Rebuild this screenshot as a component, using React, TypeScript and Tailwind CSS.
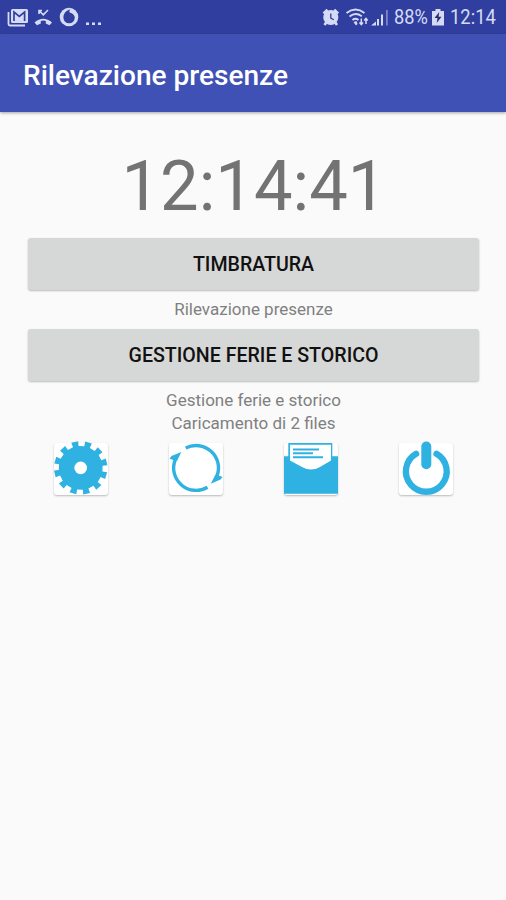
import type { ReactNode } from 'react';

const BLUE = '#2fb1e1';

// Outline of a twelve-toothed gear centred in its tile
function gearPath() {
  const points: string[] = [];
  const add = (deg: number, r: number) => {
    const a = (deg * Math.PI) / 180;
    points.push(`${(26.7 + r * Math.sin(a)).toFixed(2)} ${(24.9 - r * Math.cos(a)).toFixed(2)}`);
  };
  for (let i = 0; i < 12; i++) {
    const c = 17 + i * 30;
    add(c - 7.5, 22);
    add(c - 7.5, 26.8);
    add(c + 7.5, 26.8);
    add(c + 7.5, 22);
  }
  return `M${points.join('L')}Z`;
}

function Tile({ label, children }: { label: string; children: ReactNode }) {
  return (
    <button
      aria-label={label}
      className="h-[52px] w-[54px] rounded-[3px] bg-white shadow-[0_1px_2px_rgba(0,0,0,0.26)]"
    >
      <svg viewBox="0 0 54 52" className="block h-[52px] w-[54px] overflow-visible" fill="none">
        {children}
      </svg>
    </button>
  );
}

function WideButton({ children }: { children: ReactNode }) {
  return (
    <button className="h-[52px] w-full rounded-[3px] bg-[#d6d8d7] text-[19.600px] leading-[54px] font-medium text-[#111] shadow-[0_1px_2px_rgba(0,0,0,0.26)]">
      {children}
    </button>
  );
}

function StatusBar() {
  return (
    <div className="flex h-[34px] items-center justify-between bg-[#303f9f] pr-[9px] pl-[7px] text-[#d6dbf5]">
      <svg width="98" height="34" viewBox="7 0 98 34" fill="none">
        <path d="M8.500 12v12q0 1.500 1.500 1.500H25" stroke="currentColor" strokeWidth="1.800" />
        <rect x="11" y="9" width="17" height="14" rx="1.500" fill="currentColor" />
        <path d="M14 21v-9l5.300 4.500 5.300-4.500v9" stroke="#303f9f" strokeWidth="1.700" />
        <path d="M39 10.500l4.300 4.300 4.700-4.800M39 14v-3.500h3" stroke="currentColor" strokeWidth="1.600" />
        <path d="M34.500 22.500q8.800-7.500 17.500 0l-2.500 2.700-3.700-1.800v-2.500q-2.500-1-5 0v2.500L37 25.200z" fill="currentColor" />
        <circle cx="69" cy="17" r="9.300" fill="currentColor" />
        <path d="M70.500 9.500c-1.500 1.200-1.300 2.200-.8 2.900 3 .6 5.100 2.700 5.100 5.200a5.700 5.700 0 0 1-11.400 0c0-4 2.700-7.500 7.100-8.100z" fill="#303f9f" />
        <path d="M86 22.500h3v2.500h-3zM92 22.500h3v2.500h-3zM98 22.500h3v2.500h-3z" fill="currentColor" />
      </svg>
      <div className="flex items-center">
        <svg width="73" height="34" viewBox="320 0 73 34" fill="none">
          <circle cx="329.800" cy="17.500" r="7.500" fill="currentColor" />
          <path d="M322.500 13.500l4-3.800M333.200 9.700l4 3.800M325.500 22l-2 3M334 22l2 3" stroke="currentColor" strokeWidth="2.600" />
          <path d="M329.800 13.500v4.500l3 1.700" stroke="#303f9f" strokeWidth="1.300" />
          <path d="M345.500 13q9-7 18 0M348.500 16.500q6-4.800 12.300-.3M351.500 20q3-2.500 6 0" stroke="currentColor" strokeWidth="1.800" />
          <path d="M352.500 22l3-1 1 3-1.500 1.500z" fill="currentColor" />
          <path d="M360.300 18.500v6M358.500 22.500l1.800 2 1.700-2M365 24v-5.500M363.200 20.500l1.800-2 1.700 2" stroke="currentColor" strokeWidth="1.500" />
          <path d="M370 25.500l5-4v4zM376 19h2v6.500h-2zM380 14.500h2v11h-2z" fill="currentColor" />
          <path d="M385 10h1.800v15.500H385z" fill="currentColor" opacity=".45" />
        </svg>
        <span className="w-[38px] origin-left scale-x-[.91] text-[20px] leading-[36px] whitespace-nowrap">88%</span>
        <svg width="13" height="34" viewBox="431 0 13 34" className="mr-[5px]">
          <path d="M434.500 9h5v2h3.500v14.500h-12V11h3.500z" fill="currentColor" />
          <path d="M438.300 12l-4.800 6h3l-.8 5 4.800-6.200h-3z" fill="#252d68" />
        </svg>
        <span className="w-[47px] origin-left scale-x-[.92] text-[20px] leading-[36px] whitespace-nowrap">12:14</span>
      </div>
    </div>
  );
}

export default function App() {
  return (
    <div className="min-h-screen w-full bg-[#fafafa] font-['Roboto',sans-serif]">
      <StatusBar />
      <header className="flex h-[78px] items-center bg-[#3f51b5] pt-[6px] pl-[23px] shadow-[0_1px_3px_rgba(0,0,0,0.35)]">
        <h1 className="origin-left scale-x-[.985] text-[28.500px] leading-[32px] font-medium whitespace-nowrap text-white">Rilevazione presenze</h1>
      </header>
      <main className="flex flex-col items-center pt-[32px] pr-[27px] pl-[28px]">
        <time className="h-[94px] scale-x-[.975] text-[70.500px] leading-[84px] text-[#737373]">12:14:41</time>
        <WideButton>TIMBRATURA</WideButton>
        <p className="pt-[8px] pb-[8px] text-[17px] leading-[23px] text-[#808080]">Rilevazione presenze</p>
        <WideButton>GESTIONE FERIE E STORICO</WideButton>
        <p className="pt-[8px] text-[17px] leading-[23px] text-[#808080]">Gestione ferie e storico</p>
        <p className="text-[17px] leading-[23px] text-[#808080]">Caricamento di 2 files</p>
        <nav className="mt-[8px] flex w-[400px] justify-between">
          <Tile label="Impostazioni">
            <path d={gearPath()} fill={BLUE} />
            <circle cx="26.700" cy="24.900" r="6.300" fill="white" />
          </Tile>
          <Tile label="Sincronizza">
            <path d="M16.700 5.100A22.400 22.400 0 0 1 48 33" stroke={BLUE} strokeWidth="3.400" />
            <path d="M38.500 44.200A22.400 22.400 0 0 1 6.300 16.500" stroke={BLUE} strokeWidth="3.400" />
            <path d="M.5 15.800L2.500 13 12.300 9 8 18 4.500 17zM53.500 34L51.500 36.500 41.800 40.800 46.500 31.500 49.800 32.500z" fill={BLUE} />
          </Tile>
          <Tile label="Messaggi">
            <path d="M0 13.200h4.300V0h44v13.200H54V50.700H0z" fill={BLUE} />
            <path d="M6 1.800h41v15.700L35.500 24.300q-3.500 2.200-8.500 2.200t-8.500-2.200L6 17.500z" fill="white" />
            <path d="M9 6.500h26M9 10.200h20M9 14.200h30" stroke={BLUE} strokeWidth="1.900" />
          </Tile>
          <Tile label="Esci">
            <path d="M17.100 10.700A20.400 20.400 0 1 0 37.500 10.700" stroke={BLUE} strokeWidth="6.300" strokeLinecap="round" />
            <path d="M27.300 3.500v17.800" stroke={BLUE} strokeWidth="10" strokeLinecap="round" />
          </Tile>
        </nav>
      </main>
    </div>
  );
}
